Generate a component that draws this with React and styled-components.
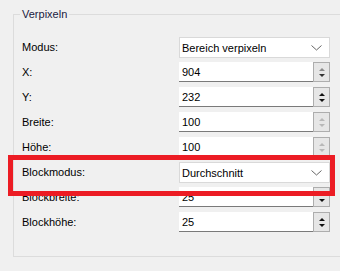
import React from "react";
import styled, { createGlobalStyle } from "styled-components";

const Global = createGlobalStyle`
  html, body {
    margin: 0;
    background: #f0f0f0;
  }
  body {
    font-family: "Liberation Sans", Arial, sans-serif;
    font-size: 11px;
    color: #000;
  }
`;

const Page = styled.div`
  position: relative;
  width: 340px;
  height: 271px;
  overflow: hidden;
  padding: 7px 0 0 13px;
  box-sizing: border-box;
`;

const Group = styled.fieldset`
  margin: 0;
  width: 360px;
  height: 250px;
  box-sizing: border-box;
  border: 1px solid #dcdcdc;
  padding: 16px 0 0 8px;
`;

const Legend = styled.legend`
  padding: 0 2px;
  margin-left: -2px;
  line-height: 14px;
  color: #1a1a40;
`;

const Form = styled.div`
  display: grid;
  grid-template-columns: 157px 151px;
  grid-auto-rows: 21px;
  row-gap: 4px;
  align-items: center;
`;

const Label = styled.div`
  line-height: 14px;
  padding-bottom: 2px;
`;

const Combo = styled.div`
  display: flex;
  align-items: center;
  justify-content: space-between;
  height: 21px;
  box-sizing: border-box;
  background: #fff;
  border: 1px solid #d9d9d9;
  padding: 0 7px 0 2px;
`;

const Spin = styled.div`
  display: flex;
  height: 20px;
  align-self: start;
`;

const Edit = styled.div`
  flex: 1;
  display: flex;
  align-items: center;
  background: #fff;
  border-bottom: 1px solid #7a7a7a;
  padding-left: 3px;
`;

const Buttons = styled.div`
  width: 17px;
  box-sizing: border-box;
  border: 1px solid #adadad;
  background: #e6e6e6;
  display: flex;
  flex-direction: column;
  align-items: center;
  justify-content: center;
  gap: 3px;
`;

const Arrow = styled.span`
  width: 0;
  height: 0;
  border-left: 3px solid transparent;
  border-right: 3px solid transparent;
  ${(p) =>
    p.down
      ? `border-top: 3px solid ${p.color};`
      : `border-bottom: 3px solid ${p.color};`}
`;

const Highlight = styled.div`
  position: absolute;
  left: 8px;
  top: 155px;
  width: 327px;
  height: 41px;
  box-sizing: border-box;
  border: 5px solid #ec1c24;
  pointer-events: none;
`;

const Chevron = () => (
  <svg width="11" height="6" viewBox="0 0 11 6">
    <path d="M0.5 0.5 L5.5 5 L10.5 0.5" fill="none" stroke="#666" strokeWidth="1" />
  </svg>
);

const SpinEdit = ({ value, up = "#111", down = "#111" }) => (
  <Spin>
    <Edit>{value}</Edit>
    <Buttons>
      <Arrow color={up} />
      <Arrow down color={down} />
    </Buttons>
  </Spin>
);

const rows = [
  ["Modus:", { combo: "Bereich verpixeln" }],
  ["X:", { value: "904", up: "#8a8a8a", down: "#333" }],
  ["Y:", { value: "232" }],
  ["Breite:", { value: "100", up: "#b8b8b8", down: "#b8b8b8" }],
  ["Höhe:", { value: "100", up: "#b8b8b8", down: "#b8b8b8" }],
  ["Blockmodus:", { combo: "Durchschnitt" }],
  ["Blockbreite:", { value: "25" }],
  ["Blockhöhe:", { value: "25" }],
];

export default function App() {
  return (
    <Page>
      <Global />
      <Group>
        <Legend>Verpixeln</Legend>
        <Form>
          {rows.map(([label, c]) => (
            <React.Fragment key={label}>
              <Label>{label}</Label>
              {c.combo ? (
                <Combo>
                  {c.combo}
                  <Chevron />
                </Combo>
              ) : (
                <SpinEdit value={c.value} up={c.up} down={c.down} />
              )}
            </React.Fragment>
          ))}
        </Form>
      </Group>
      <Highlight />
    </Page>
  );
}
